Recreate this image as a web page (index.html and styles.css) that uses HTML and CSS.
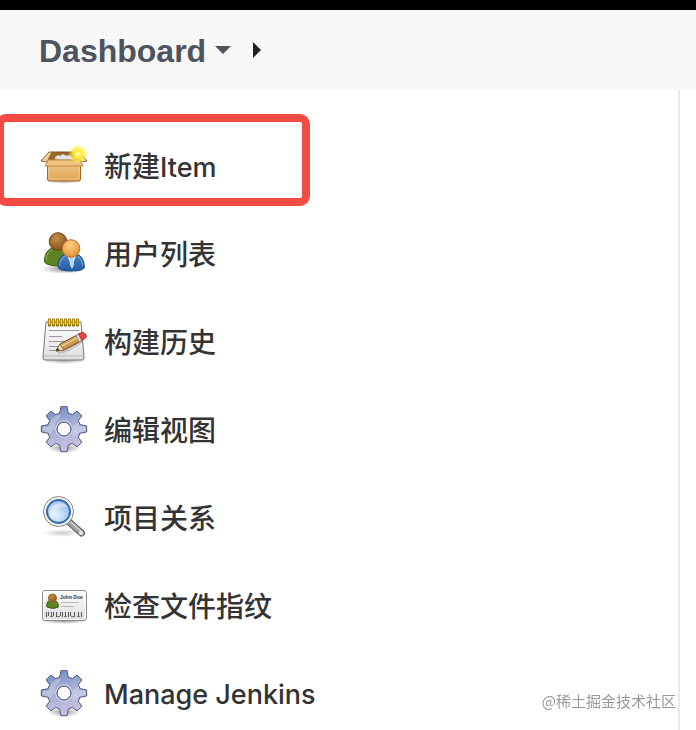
FILE: index.html
```html
<!DOCTYPE html>
<html lang="zh-CN">
<head>
	<meta charset="UTF-8">
	<meta name="viewport" content="width=device-width, initial-scale=1">
	<title>Dashboard [Jenkins]</title>
	<link rel="stylesheet" href="styles.css">
</head>
<body>
	<!-- shared gradients and the gear, which is used twice -->
	<svg class="sprite" aria-hidden="true">
		<defs>
			<linearGradient id="box-front" x1="0" y1="0" x2="0" y2="1">
				<stop offset="0" stop-color="#f0c888"/>
				<stop offset="1" stop-color="#dfa455"/>
			</linearGradient>
			<radialGradient id="glow">
				<stop offset="0" stop-color="#fff9a0"/>
				<stop offset=".3" stop-color="#fdf032"/>
				<stop offset=".6" stop-color="#fbf03c" stop-opacity=".75"/>
				<stop offset="1" stop-color="#fff36b" stop-opacity="0"/>
			</radialGradient>
			<radialGradient id="shadow">
				<stop offset="0" stop-color="#000" stop-opacity=".4"/>
				<stop offset="1" stop-color="#000" stop-opacity="0"/>
			</radialGradient>
			<radialGradient id="head-brown" cx=".4" cy=".3" r=".75">
				<stop offset="0" stop-color="#c48b4c"/>
				<stop offset="1" stop-color="#885017"/>
			</radialGradient>
			<radialGradient id="head-orange" cx=".45" cy=".3" r=".75">
				<stop offset="0" stop-color="#ffd18a"/>
				<stop offset="1" stop-color="#df8e2b"/>
			</radialGradient>
			<linearGradient id="blue" x1="0" y1="0" x2="0" y2="1">
				<stop offset="0" stop-color="#4885c8"/>
				<stop offset="1" stop-color="#245ba0"/>
			</linearGradient>
			<linearGradient id="paper" x1="0" y1="0" x2="0" y2="1">
				<stop offset="0" stop-color="#fff"/>
				<stop offset="1" stop-color="#dedede"/>
			</linearGradient>
			<linearGradient id="steel" x1="0" y1="0" x2=".3" y2="1">
				<stop offset="0" stop-color="#6885bd"/>
				<stop offset=".5" stop-color="#a4add6"/>
				<stop offset="1" stop-color="#c6c0e0"/>
			</linearGradient>
			<radialGradient id="lens" cx=".4" cy=".65" r=".7">
				<stop offset="0" stop-color="#e6f3ff"/>
				<stop offset="1" stop-color="#8dbbeb"/>
			</radialGradient>
			<linearGradient id="pencil" x1="0" y1="0" x2="1" y2="1">
				<stop offset="0" stop-color="#f3c68a"/>
				<stop offset="1" stop-color="#b87528"/>
			</linearGradient>
		</defs>
		<symbol id="gear" viewBox="0 0 48 48">
			<ellipse cx="24" cy="42" rx="17" ry="5" fill="url(#shadow)"/>
			<g transform="translate(24 23)">
				<path fill="url(#steel)" fill-rule="evenodd" stroke="#4d5b80" stroke-linejoin="round" d="M-4.3-15.9L-3-22.7H3L4.3-15.9Q6.3-15.5 8.2-14.3L13-18 17.9-13.2 14.3-8.2Q15.5-6.3 15.9-4.3L22.7-3V3L15.9 4.3Q15.5 6.3 14.3 8.2L17.9 13.2 13.2 17.9 8.2 14.3Q6.3 15.5 4.3 15.9L3 22.7H-3L-4.3 15.9Q-6.3 15.5-8.2 14.3L-13.2 17.9-17.9 13.2-14.3 8.2Q-15.5 6.3-15.9 4.3L-22.7 3V-3L-15.9-4.3Q-15.5-6.3-14.3-8.2L-17.9-13.2-13.2-17.9-8.2-14.3Q-6.3-15.5-4.3-15.9ZM7 0A7 7 0 1 0-7 0 7 7 0 1 0 7 0Z"/>
				<path fill="#fff" opacity=".25" d="M-14-7Q-9-15-3-15L-5-10Q-9-8-9-2L-13 4-21 2V-2L-15-3ZM9-3L15-7 15-3 21-2V2L15 3Q12 9 8 7 10 2 9-3Z"/>
				<path fill="none" stroke="#dfe4f5" d="M8.2 0A8.2 8.2 0 1 0-8.2 0 8.2 8.2 0 1 0 8.2 0Z"/>
				<circle r="7" fill="none" stroke="#66739b"/>
			</g>
		</symbol>
	</svg>

	<header class="topbar">
		<nav class="breadcrumbs" aria-label="Breadcrumb">
			<a class="crumb" href="#">Dashboard</a>
			<button class="crumb-menu" type="button" aria-label="Dashboard menu">
				<svg width="16" height="8" viewBox="0 0 16 8"><path d="M0 0H16L8 8Z" fill="#4d545d"/></svg>
			</button>
			<svg class="separator" width="8" height="16" viewBox="0 0 8 16" aria-hidden="true"><path d="M0 0L8 8 0 16Z" fill="#222"/></svg>
		</nav>
	</header>

	<main class="page">
		<aside class="side-panel">
			<ul class="tasks">
				<li class="task highlighted">
					<a class="task-link" href="#">
						<svg class="task-icon" viewBox="0 0 48 48" aria-hidden="true">
							<ellipse cx="24" cy="38" rx="21" ry="4" fill="url(#shadow)"/>
							<path d="M12 10H36L41 20H7Z" fill="#9b6727" stroke="#855315"/>
							<path d="M15 17Q16 12 20 14 23 11 26 14 31 12 34 18Z" fill="#e8e6e3" stroke="#c9c5c0"/>
							<path d="M12 10L7 20 1 19 9 10ZM36 10L41 20 47 19 39 10Z" fill="#efd0a0" stroke="#996526" stroke-linejoin="round"/>
							<path d="M7.500 19H40.500V37Q40.500 39 38.500 39H9.500Q7.500 39 7.500 37Z" fill="url(#box-front)" stroke="#a26b25"/>
							<path d="M8 18H40L43 24H5Z" fill="#edc482" stroke="#c58a40" stroke-linejoin="round"/>
							<path d="M9 25V37H39V25" fill="none" stroke="#f9dfb2" opacity=".5"/>
							<circle cx="38" cy="12" r="10" fill="url(#glow)"/>
							<path d="M38 8L39 11 42 12 39 13 38 16 37 13 34 12 37 11Z" fill="#fffba0"/>
						</svg>
						<span class="task-label">新建<span class="latin">Item</span></span>
					</a>
				</li>
				<li class="task">
					<a class="task-link" href="#">
						<svg class="task-icon" viewBox="0 0 48 48" aria-hidden="true">
							<ellipse cx="23" cy="39" rx="22" ry="5" fill="url(#shadow)"/>
							<path d="M4.500 31Q4.500 21 12 18H23Q28 22 28 34 17 38 7 34 4.500 33 4.500 31Z" fill="#5b8223" stroke="#3c5d0d"/>
							<path d="M6 30Q7 22 12 19.500" fill="none" stroke="#91b15c"/>
							<circle cx="18" cy="11.500" r="8.800" fill="url(#head-brown)" stroke="#764411"/>
							<path d="M18 37Q18 27 25 24H37Q44 27 44.500 37 44 41 31 41 19 41 18 37Z" fill="url(#blue)" stroke="#1d4b87"/>
							<path d="M19.500 36Q20 29 25 26M43 36Q42 29 38 26" fill="none" stroke="#7eade0"/>
							<path d="M27 25H36L32 38Z" fill="#eaf4fc"/>
							<path d="M30 27H33L34 35 32 39 30 35Z" fill="#bdd8ea"/>
							<circle cx="31" cy="18.500" r="8.800" fill="url(#head-orange)" stroke="#b87122"/>
						</svg>
						<span class="task-label">用户列表</span>
					</a>
				</li>
				<li class="task">
					<a class="task-link" href="#">
						<svg class="task-icon" viewBox="0 0 48 48" aria-hidden="true">
							<ellipse cx="24" cy="42" rx="23" ry="4" fill="url(#shadow)"/>
							<path d="M6 4H41L44 39Q44 42 42 42H5Q3 42 3 39Z" fill="url(#paper)" stroke="#777"/>
							<path d="M4 38H43" stroke="#b9b9b9"/>
							<path d="M9 12.500H39M9 18.500H22M9 23.500H34M9 28.500H29M9 32.500H20" stroke="#999"/>
							<path d="M9.500 2V7M13.500 2V7M17.500 2V7M21.500 2V7M25.500 2V7M29.500 2V7M33.500 2V7M37.500 2V7" stroke="#927009" stroke-width="3.400" stroke-linecap="round"/>
							<path d="M9.500 2V6M13.500 2V6M17.500 2V6M21.500 2V6M25.500 2V6M29.500 2V6M33.500 2V6M37.500 2V6" stroke="#edcf28" stroke-width="1.800" stroke-linecap="round"/>
							<path d="M18 35Q31 32 42 23" fill="none" stroke="#000" stroke-width="3" opacity=".15"/>
							<path d="M16 33L20 26 39 16 43 22 24 32Z" fill="url(#pencil)" stroke="#774d21" stroke-linejoin="round"/>
							<path d="M16 33L20 26 24 32Z" fill="#f4dbad" stroke="#8e6c3c"/>
							<path d="M16 33L17.500 30 19.500 32Z" fill="#222"/>
							<path d="M22 28L39 19" stroke="#ffdd9f"/>
							<path d="M36 17.500L39 16 42 22 39 24Z" fill="#ddd" stroke="#999"/>
							<path d="M38.500 16L42 14.500Q45 14 46.500 18 46.500 20 42 22.500Z" fill="#e74b46" stroke="#b92f2b"/>
						</svg>
						<span class="task-label">构建历史</span>
					</a>
				</li>
				<li class="task">
					<a class="task-link" href="#">
						<svg class="task-icon" aria-hidden="true"><use href="#gear"/></svg>
						<span class="task-label">编辑视图</span>
					</a>
				</li>
				<li class="task">
					<a class="task-link" href="#">
						<svg class="task-icon" viewBox="0 0 48 48" aria-hidden="true">
							<ellipse cx="22" cy="39" rx="20" ry="4" fill="url(#shadow)" opacity=".5"/>
							<path d="M28 27L41.500 39" stroke="#555753" stroke-width="7" stroke-linecap="round"/>
							<path d="M28 27L41.500 39" stroke="#a9a9a7" stroke-width="5" stroke-linecap="round"/>
							<path d="M31 28L41 37" stroke="#eee" stroke-width="1"/>
							<path d="M29 31L38 39" stroke="#777" stroke-width="1"/>
							<circle cx="41" cy="39" r="2" fill="#e3e3e1"/>
							<circle cx="18.500" cy="17.500" r="15" fill="#f4f4f3" stroke="#858684"/>
							<circle cx="18.500" cy="17.500" r="11.500" fill="url(#lens)" stroke="#3d6da9" stroke-width="2"/>
							<path d="M10 22Q8 11 19 9 25 9 27 13 20 12 16 17 13 20 13 25Z" fill="#fff" opacity=".4"/>
						</svg>
						<span class="task-label">项目关系</span>
					</a>
				</li>
				<li class="task">
					<a class="task-link" href="#">
						<svg class="task-icon" viewBox="0 0 48 48" aria-hidden="true">
							<ellipse cx="24" cy="39" rx="23" ry="3" fill="url(#shadow)"/>
							<rect x="2.500" y="8.500" width="44" height="30" rx="2.500" fill="url(#paper)" stroke="#8c8c8c"/>
							<rect x="3.500" y="9.500" width="42" height="28" rx="2" fill="none" stroke="#fff"/>
							<path d="M6.500 24Q6.500 19 10 18H15Q18.500 20 18.500 25 13 28 7 25Z" fill="#5b8521" stroke="#3f6410"/>
							<circle cx="12.500" cy="16" r="4" fill="url(#head-brown)" stroke="#a16424"/>
							<text class="card-name" x="20" y="17">John Doe</text>
							<path d="M21 20.500H39M21 24.500H34" stroke="#b5b5b5"/>
							<path d="M6.500 30V35M8.500 30V34M11.500 30V35M13.500 30V34M16.500 30V35M20.500 30V34M22.500 30V35M25.500 30V34M28.500 30V35M30.500 30V34M34.500 30V35M38.500 30V34M41.500 30V35" stroke="#555"/>
							<path d="M10 34.500H13M17 34.500H20M24 34.500H27M31 34.500H34M37 34.500H40" stroke="#777"/>
						</svg>
						<span class="task-label">检查文件指纹</span>
					</a>
				</li>
				<li class="task">
					<a class="task-link" href="#">
						<svg class="task-icon" aria-hidden="true"><use href="#gear"/></svg>
						<span class="task-label latin">Manage Jenkins</span>
					</a>
				</li>
			</ul>
		</aside>
	</main>

	<p class="watermark">@稀土掘金技术社区</p>
</body>
</html>
```
FILE: styles.css
```css
*,
*::after {
	box-sizing:border-box;
}

::-webkit-scrollbar {
	display:none;
}

body {
	display:flex;
	flex-direction:column;
	min-height:100vh;
	margin:0;
	background:#fff;
	color:#333;
	font-family:"Inter","Noto Sans CJK SC",sans-serif;
}

.sprite {
	position:absolute;
	width:0;
	height:0;
}

.topbar {
	border-top:10px solid #000;
	background:#f7f7f7;
}

.breadcrumbs {
	display:flex;
	align-items:center;
	height:80px;
	padding:0 39px;
}

.crumb {
	padding-top:2px;
	color:#4d545d;
	font-family:"Liberation Sans",sans-serif;
	font-size:32px;
	font-weight:bold;
	line-height:40px;
	text-decoration:none;
}

.crumb-menu {
	display:flex;
	margin:0 22px 0 9px;
	padding:0;
	border:0;
	background:none;
	cursor:pointer;
}

.page {
	display:flex;
	flex:1;
	padding-right:16px;
}

.side-panel {
	flex:1;
	border-right:2px solid #eaeaea;
}

.tasks {
	margin:0;
	padding:32px 0 0;
	list-style:none;
}

.task {
	position:relative;
}

.task-link {
	display:flex;
	align-items:center;
	gap:16px;
	height:88px;
	padding:0 40px;
	color:#333;
	font-weight:500;
	line-height:40px;
	text-decoration:none;
}

.task-icon {
	flex:none;
	width:48px;
	height:48px;
}

.task-label {
	padding-top:2px;
	font-size:28px;
}

.latin {
	font-size:27px;
}

.card-name {
	fill:#333;
	font-family:"Liberation Sans",sans-serif;
	font-size:5px;
	font-weight:bold;
}

/* red frame over the first task */
.highlighted::after {
	content:"";
	position:absolute;
	top:-8px;
	left:-4px;
	width:314px;
	height:92px;
	border:8px solid #f44b45;
	border-radius:10px;
	pointer-events:none;
}

.watermark {
	position:fixed;
	right:20px;
	bottom:17px;
	margin:0;
	color:#999;
	font-family:"Noto Sans CJK SC",sans-serif;
	font-size:15px;
	line-height:24px;
}
```
